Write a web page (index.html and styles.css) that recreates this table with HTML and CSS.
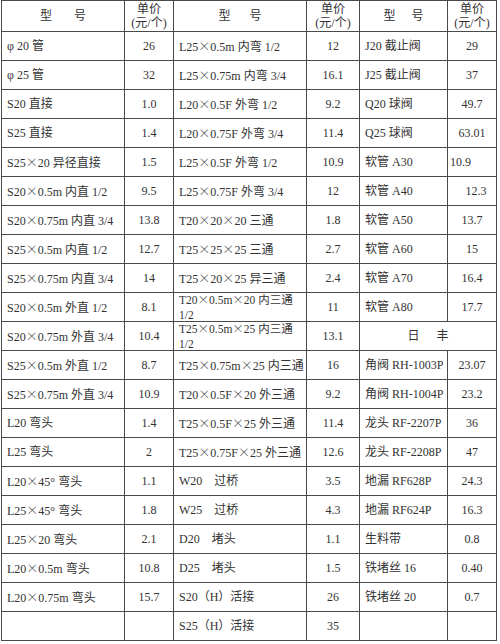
FILE: index.html
```html
<!DOCTYPE html>
<html lang="zh">
<head>
<meta charset="utf-8">
<link rel="stylesheet" href="styles.css">
</head>
<body>
<table class="price">
  <colgroup>
    <col class="c1"><col class="c2"><col class="c3"><col class="c4"><col class="c5"><col class="c6">
  </colgroup>
  <tr class="head">
    <th class="name-h g20">型 号</th>
    <th class="price-h">单价<br>(元/个)</th>
    <th class="name-h g17">型 号</th>
    <th class="price-h">单价<br>(元/个)</th>
    <th class="name-h g14">型 号</th>
    <th class="price-h">单价<br>(元/个)</th>
  </tr>
  <tr><td>φ 20 管</td><td class="n">26</td><td>L25<span class="x">×</span>0.5m 内弯 1/2</td><td class="n">12</td><td>J20 截止阀</td><td class="n">29</td></tr>
  <tr><td>φ 25 管</td><td class="n">32</td><td>L25<span class="x">×</span>0.75m 内弯 3/4</td><td class="n">16.1</td><td>J25 截止阀</td><td class="n">37</td></tr>
  <tr><td>S20 直接</td><td class="n">1.0</td><td>L20<span class="x">×</span>0.5F 外弯 1/2</td><td class="n">9.2</td><td>Q20 球阀</td><td class="n">49.7</td></tr>
  <tr><td>S25 直接</td><td class="n">1.4</td><td>L20<span class="x">×</span>0.75F 外弯 3/4</td><td class="n">11.4</td><td>Q25 球阀</td><td class="n">63.01</td></tr>
  <tr><td>S25<span class="x">×</span>20 异径直接</td><td class="n">1.5</td><td>L25<span class="x">×</span>0.5F 外弯 1/2</td><td class="n">10.9</td><td>软管 A30</td><td class="l">10.9</td></tr>
  <tr><td>S20<span class="x">×</span>0.5m 内直 1/2</td><td class="n">9.5</td><td>L25<span class="x">×</span>0.75F 外弯 3/4</td><td class="n">12</td><td>软管 A40</td><td class="n r">12.3</td></tr>
  <tr><td>S20<span class="x">×</span>0.75m 内直 3/4</td><td class="n">13.8</td><td>T20<span class="x">×</span>20<span class="x">×</span>20 三通</td><td class="n">1.8</td><td>软管 A50</td><td class="n">13.7</td></tr>
  <tr><td>S25<span class="x">×</span>0.5m 内直 1/2</td><td class="n">12.7</td><td>T25<span class="x">×</span>25<span class="x">×</span>25 三通</td><td class="n">2.7</td><td>软管 A60</td><td class="n">15</td></tr>
  <tr><td>S25<span class="x">×</span>0.75m 内直 3/4</td><td class="n">14</td><td>T25<span class="x">×</span>20<span class="x">×</span>25 异三通</td><td class="n">2.4</td><td>软管 A70</td><td class="n">16.4</td></tr>
  <tr><td>S20<span class="x">×</span>0.5m 外直 1/2</td><td class="n">8.1</td><td class="two"><div class="wrap"><div class="lines">T20<span class="x">×</span>0.5m<span class="x">×</span>20 内三通 1/2</div></div></td><td class="n">11</td><td>软管 A80</td><td class="n">17.7</td></tr>
  <tr><td>S20<span class="x">×</span>0.75m 外直 3/4</td><td class="n">10.4</td><td class="two"><div class="wrap"><div class="lines">T25<span class="x">×</span>0.5m<span class="x">×</span>25 内三通 1/2</div></div></td><td class="n">13.1</td><td colspan="2" class="brand">日 丰</td></tr>
  <tr><td>S25<span class="x">×</span>0.5m 外直 1/2</td><td class="n">8.7</td><td>T25<span class="x">×</span>0.75m<span class="x">×</span>25 内三通</td><td class="n">16</td><td>角阀 RH-1003P</td><td class="n">23.07</td></tr>
  <tr><td>S25<span class="x">×</span>0.75m 外直 3/4</td><td class="n">10.9</td><td>T20<span class="x">×</span>0.5F<span class="x">×</span>20 外三通</td><td class="n">9.2</td><td>角阀 RH-1004P</td><td class="n">23.2</td></tr>
  <tr><td>L20 弯头</td><td class="n">1.4</td><td>T25<span class="x">×</span>0.5F<span class="x">×</span>25 外三通</td><td class="n">11.4</td><td>龙头 RF-2207P</td><td class="n">36</td></tr>
  <tr><td>L25 弯头</td><td class="n">2</td><td>T25<span class="x">×</span>0.75F<span class="x">×</span>25 外三通</td><td class="n">12.6</td><td>龙头 RF-2208P</td><td class="n">47</td></tr>
  <tr><td>L20<span class="x">×</span>45° 弯头</td><td class="n">1.1</td><td>W20　过桥</td><td class="n">3.5</td><td>地漏 RF628P</td><td class="n">24.3</td></tr>
  <tr><td>L25<span class="x">×</span>45° 弯头</td><td class="n">1.8</td><td>W25　过桥</td><td class="n">4.3</td><td>地漏 RF624P</td><td class="n">16.3</td></tr>
  <tr><td>L25<span class="x">×</span>20 弯头</td><td class="n">2.1</td><td>D20　堵头</td><td class="n">1.1</td><td>生料带</td><td class="n">0.8</td></tr>
  <tr><td>L20<span class="x">×</span>0.5m 弯头</td><td class="n">10.8</td><td>D25　堵头</td><td class="n">1.5</td><td>铁堵丝 16</td><td class="n">0.40</td></tr>
  <tr><td>L20<span class="x">×</span>0.75m 弯头</td><td class="n">15.7</td><td>S20（H）活接</td><td class="n">26</td><td>铁堵丝 20</td><td class="n">0.7</td></tr>
  <tr><td></td><td class="n"></td><td>S25（H）活接</td><td class="n">35</td><td></td><td class="n"></td></tr>
</table>
</body>
</html>
```
FILE: styles.css
```css
html, body {
  margin: 0;
  padding: 0;
  background: #ffffff;
}

.price {
  border-collapse: collapse;
  table-layout: fixed;
  width: 495px;
  margin: 0 0 0 1px;
  font-family: "Liberation Serif", "Noto Sans CJK SC", serif;
  font-size: 12px;
  color: #333333;
}

.c1 { width: 123px; }
.c2 { width: 49px; }
.c3 { width: 133px; }
.c4 { width: 53px; }
.c5 { width: 88px; }
.c6 { width: 49px; }

.price td,
.price th {
  border: 1px solid #4a4a4a;
  padding: 0 0 0 5px;
  height: 28px;
  line-height: 14px;
  text-align: left;
  vertical-align: middle;
  font-weight: normal;
  white-space: nowrap;
  overflow: hidden;
}

.price .x {
  font-family: "Noto Sans CJK SC", sans-serif;
  font-weight: 300;
}

.price .head th {
  height: 30px;
  padding: 0;
  text-align: center;
}

.g20 { word-spacing: 19px; }
.g17 { word-spacing: 16px; }
.g14 { word-spacing: 13px; }

.price .head .price-h {
  font-size: 12px;
  line-height: 14px;
}

.price td.n {
  text-align: center;
  padding: 0;
}

.price td.r {
  padding-left: 8px;
}

.price td.l {
  padding-left: 2px;
}

.price td.two {
  white-space: normal;
  font-size: 11.5px;
  padding-right: 2px;
  overflow: visible;
}

.wrap {
  height: 28px;
  display: flex;
  flex-direction: column;
  justify-content: center;
}

.lines {
  line-height: 15px;
}

.price td.brand {
  text-align: center;
  padding: 0;
  word-spacing: 14px;
}
```
